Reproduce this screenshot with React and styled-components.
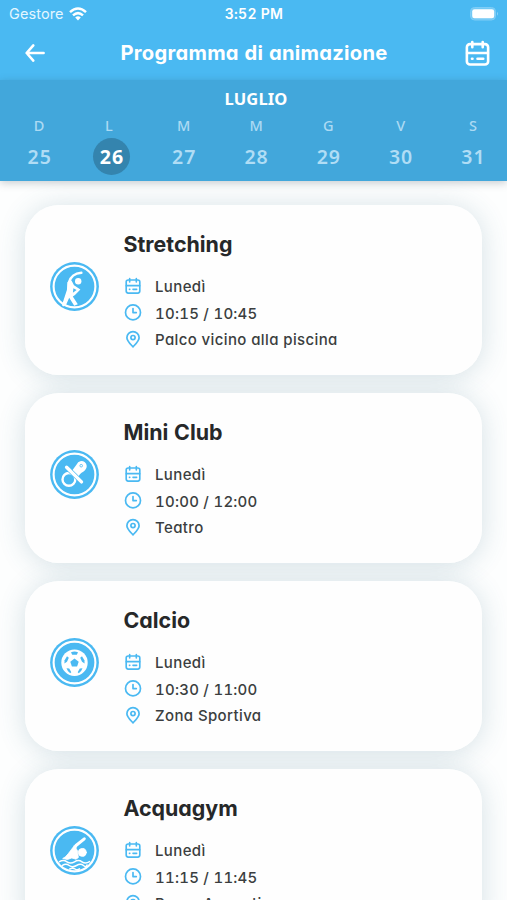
import React from 'react';
import styled, { createGlobalStyle } from 'styled-components';

const BLUE = '#4ab9f2';

const GlobalStyle = createGlobalStyle`
  * { box-sizing: border-box; }
  html, body { margin: 0; padding: 0; background: #fdfefe; }
  body { font-family: Inter, "Noto Sans", sans-serif; font-feature-settings: "cv11", "tnum"; }
`;

const Screen = styled.main`
  width: 507px;
  height: 900px;
  overflow: hidden;
  display: flex;
  flex-direction: column;
  background: #fdfefe;
`;

const TopBar = styled.header`
  flex: none;
  height: 80px;
  background: ${BLUE};
  color: #fff;
`;

const StatusBar = styled.div`
  height: 27px;
  padding: 0 8px 0 9px;
  display: grid;
  grid-template-columns: 1fr auto 1fr;
  align-items: center;
`;

const Carrier = styled.div`
  display: flex;
  align-items: center;
  gap: 5px;
  font-size: 14.5px;
  line-height: 20px;
  letter-spacing: 0.1px;
  color: #e4f6ff;
`;

const Clock = styled.div`
  font-size: 14px;
  line-height: 20px;
  font-weight: 600;
  letter-spacing: 0.25px;
`;

const Battery = styled.div`
  display: flex;
  justify-content: flex-end;
`;

const NavBar = styled.div`
  height: 53px;
  padding: 0 17px 1px 24px;
  display: flex;
  align-items: center;
  justify-content: space-between;
`;

const Title = styled.h1`
  margin: 0 3px 0 0;
  font-size: 20.2px;
  font-weight: 700;
  line-height: 28px;
  letter-spacing: 0.27px;
  white-space: nowrap;
`;

const Calendar = styled.section`
  position: relative;
  z-index: 1;
  flex: none;
  height: 101px;
  padding: 9px 0 0 3px;
  background: #42a7db;
  box-shadow: 0 2px 8px rgba(40, 60, 75, 0.25);
  color: #fff;
`;

const Month = styled.div`
  height: 20px;
  padding-left: 2px;
  text-align: center;
  font: 700 16.5px/20px "Noto Sans", sans-serif;
  letter-spacing: 0.1px;
`;

const Week = styled.div`
  display: grid;
  grid-template-columns: repeat(7, 72.3px);
`;

const Day = styled.div`
  display: flex;
  flex-direction: column;
  align-items: center;
  color: ${p => (p.$active ? '#fff' : '#b0ddf5')};
`;

const DayLetter = styled.span`
  height: 29px;
  margin-right: ${p => (p.$active ? 5 : 0)}px;
  font: 500 14.5px/32px "Noto Sans", sans-serif;
  color: #acdaf3;
`;

const DayNumber = styled.span`
  width: 37px;
  height: 37px;
  border-radius: 50%;
  background: ${p => (p.$active ? '#3484ae' : 'transparent')};
  font: ${p => (p.$active ? 700 : 600)} 19.5px/38px "Noto Sans", sans-serif;
  letter-spacing: 1px;
  text-indent: 1px;
  text-align: center;
`;

const List = styled.section`
  flex: 1;
  min-height: 0;
  padding: 24px 25px 0;
  display: flex;
  flex-direction: column;
  gap: 18px;
`;

const Card = styled.article`
  position: relative;
  flex: none;
  height: 170px;
  padding: 24px 25px 0;
  display: grid;
  grid-template-columns: 73.5px 1fr;
  border-radius: 34px;
  box-shadow: 0 2px 28px rgba(50, 105, 130, 0.2);

  /* surface sits above the shadows of neighbouring cards */
  &::before {
    content: "";
    position: absolute;
    inset: 0;
    border-radius: inherit;
    background: #fefefe;
    z-index: 1;
  }
  & > * { position: relative; z-index: 2; }
`;

const Badge = styled.div`
  padding-top: 33px;
  height: 82px;
`;

const CardTitle = styled.h2`
  margin: 0 0 14px;
  font-size: 21.4px;
  line-height: 30px;
  font-weight: 700;
  color: #262829;
`;

const InfoRow = styled.div`
  height: 26.8px;
  display: flex;
  align-items: center;
  gap: 13.5px;
  font-size: 15px;
  font-weight: 500;
  letter-spacing: ${p => p.$tracking || 0.38}px;
  color: #3b3e40;
  white-space: nowrap;
`;

const Icon = styled.svg`
  display: block;
  flex: none;
  overflow: visible;
`;

const CalendarIcon = ({ size, stroke }) => (
  <Icon width={size} height={size} viewBox="0 0 24 24" fill="none" stroke="currentColor" strokeWidth={stroke} strokeLinecap="round" strokeLinejoin="round">
    <rect x="1.8" y="3" width="20.4" height="19.6" rx="3" />
    <path d="M2 11.5H22M7 1V6M17 1V6M6.7 17H7.2M12 17H17.5" />
  </Icon>
);

const ClockIcon = () => (
  <Icon width="18" height="18" viewBox="0 0 18 18" fill="none" stroke="currentColor" strokeWidth="1.7" strokeLinecap="round" strokeLinejoin="round">
    <circle cx="9" cy="8.4" r="7.5" />
    <path d="M9 4.6V8.6H12.3" />
  </Icon>
);

const PinIcon = () => (
  <Icon width="18" height="18" viewBox="0 0 18 18" fill="none" stroke="currentColor" strokeWidth="1.7" strokeLinejoin="round">
    <path d="M9 15.9C6.4 13 2.9 9.8 2.9 6.7a6.1 6.1 0 0 1 12.2 0C15.1 9.8 11.6 13 9 15.9Z" />
    <circle cx="9" cy="6.6" r="2.1" />
  </Icon>
);

const InfoIcon = styled.span`
  width: 18px;
  display: flex;
  justify-content: center;
  color: ${BLUE};
`;

const drawings = {
  stretching: (
    <g>
      <path d="M31.3 10.8C25 11.3 20.2 15.2 18.8 20.8L18.2 28.2L13.4 43" fill="none" stroke="#fff" strokeWidth="2.6" strokeLinecap="round" />
      <path d="M17.6 20L21.5 18.5L24 23.3L30.4 27.6L25 33L22.8 34.5L27.8 42.3L24.2 43.8L19.2 35.8L15.8 43.5L12.8 42L17.3 29.5Z" fill="#fff" />
      <path d="M23.4 26.2L26.6 28L22.9 30.8Z" fill={BLUE} />
      <circle cx="28.2" cy="19.2" r="3.2" fill="#fff" />
    </g>
  ),
  pacifier: (
    <g>
      <circle cx="18.9" cy="29.4" r="6.4" fill="none" stroke="#fff" strokeWidth="2.4" />
      <path d="M22.2 20.5L26.8 14.2A5.2 5.2 0 1 1 35 20.2C32.7 22.8 30.3 22.5 28.6 26.5Z" fill="#fff" />
      <path d="M16.8 17.5L31.8 32.2" stroke={BLUE} strokeWidth="4.6" />
      <path d="M16.6 17.2L31.5 31.9" stroke="#fff" strokeWidth="3.4" strokeLinecap="round" />
      <circle cx="31.2" cy="15.7" r="1.3" fill="none" stroke={BLUE} strokeWidth=".8" />
    </g>
  ),
  football: (
    <g>
      <circle cx="24.5" cy="24.7" r="13.2" fill="#fff" />
      <g fill={BLUE}>
        <path d="M24.5 20.6L28.7 23.7L27.1 28.6H21.9L20.3 23.7Z" />
        <path d="M21 14.3Q24.5 12.8 28 14.3L26.8 16.7H22.2Z" />
        <path d="M14.6 22.3L17 18.3L18.8 19.8L17 23.8L14.4 25.4Z" />
        <path d="M34.4 22.3L32 18.3L30.2 19.8L32 23.8L34.6 25.4Z" />
        <path d="M16.5 30.2L19.2 30.6L21.3 34.3L20.2 35.2Q17.6 33.6 16.5 30.2Z" />
        <path d="M32.5 30.2L29.8 30.6L27.7 34.3L28.8 35.2Q31.4 33.6 32.5 30.2Z" />
      </g>
    </g>
  ),
  swimming: (
    <g fill="none" stroke="#fff" strokeLinecap="round" strokeLinejoin="round">
      <path d="M34.3 12.8L26 19.5L24 24" strokeWidth="3" />
      <path d="M24.2 19.8L27.4 24.5L28.4 31.5L26 33.2L21.8 32L17.4 33.5L12.7 32.5C17 30.5 19.5 25.7 24.2 19.8Z" fill="#fff" strokeWidth=".8" />
      <circle cx="32.3" cy="26.4" r="3.9" fill="#fff" strokeWidth="1" />
      <path d="M9.5 35.6Q13.5 33.4 17 35.8T24.5 35.8T32 35.8T39.5 35.6M12.4 39.4Q16 37.2 19.2 39.5T26.5 39.5T33.5 39.5T37 39M19.8 43Q22.5 41.3 25 43T29.5 42.9" strokeWidth="1.5" />
    </g>
  ),
};

const ActivityIcon = ({ kind }) => (
  <Icon width="49" height="49" viewBox="0 0 49 49">
    <circle cx="24.5" cy="24.5" r="24.4" fill={BLUE} />
    <circle cx="24.5" cy="24.5" r="20.9" fill="none" stroke="#fff" strokeWidth="2.1" />
    {drawings[kind]}
  </Icon>
);

const days = [['D', 25], ['L', 26], ['M', 27], ['M', 28], ['G', 29], ['V', 30], ['S', 31]];

const activities = [
  { name: 'Stretching', kind: 'stretching', time: '10:15 / 10:45', place: 'Palco vicino alla piscina' },
  { name: 'Mini Club', kind: 'pacifier', time: '10:00 / 12:00', place: 'Teatro' },
  { name: 'Calcio', kind: 'football', time: '10:30 / 11:00', place: 'Zona Sportiva' },
  { name: 'Acquagym', kind: 'swimming', time: '11:15 / 11:45', place: 'Parco Acquatico' },
];

const ActivityCard = ({ name, kind, time, place }) => (
  <Card>
    <Badge><ActivityIcon kind={kind} /></Badge>
    <div>
      <CardTitle>{name}</CardTitle>
      <InfoRow><InfoIcon><CalendarIcon size={16} stroke={2.5} /></InfoIcon>Lunedì</InfoRow>
      <InfoRow $tracking={0.24}><InfoIcon><ClockIcon /></InfoIcon>{time}</InfoRow>
      <InfoRow><InfoIcon><PinIcon /></InfoIcon>{place}</InfoRow>
    </div>
  </Card>
);

export default function App() {
  return (
    <Screen>
      <GlobalStyle />
      <TopBar>
        <StatusBar>
          <Carrier>
            Gestore
            <Icon width="18" height="14" viewBox="0 0 18 14" fill="none" stroke="#fff" strokeWidth="2.5">
              <path d="M1 5.2Q9-2.2 17 5.2M4 8.4Q9 3.9 14 8.4" />
              <path d="M6.2 10.5Q9 8.2 11.8 10.5L9 13.5Z" fill="#fff" stroke="none" />
            </Icon>
          </Carrier>
          <Clock>3:52 PM</Clock>
          <Battery>
            <Icon width="29" height="14" viewBox="0 0 29 14">
              <rect x=".5" y=".5" width="25" height="12.5" rx="4" fill="#72c9f5" stroke="#7fcdf6" />
              <rect x="2.2" y="2.2" width="22" height="9" rx="2.3" fill="#fff" />
              <path d="M27 4.7Q29 6.7 27 8.7Z" fill="#8bd2f7" />
            </Icon>
          </Battery>
        </StatusBar>
        <NavBar>
          <Icon width="22" height="20" viewBox="0 0 22 20" fill="none" stroke="#fff" strokeWidth="2.6" strokeLinecap="round" strokeLinejoin="round">
            <path d="M9.3 2.4L2.6 10L9.3 17.6M2.8 10H19.6" />
          </Icon>
          <Title>Programma di animazione</Title>
          <CalendarIcon size={25} stroke={2.5} />
        </NavBar>
      </TopBar>
      <Calendar>
        <Month>LUGLIO</Month>
        <Week>
          {days.map(([letter, number]) => (
            <Day key={number} $active={number === 26}>
              <DayLetter $active={number === 26}>{letter}</DayLetter>
              <DayNumber $active={number === 26}>{number}</DayNumber>
            </Day>
          ))}
        </Week>
      </Calendar>
      <List>
        {activities.map(a => <ActivityCard key={a.name} {...a} />)}
      </List>
    </Screen>
  );
}
